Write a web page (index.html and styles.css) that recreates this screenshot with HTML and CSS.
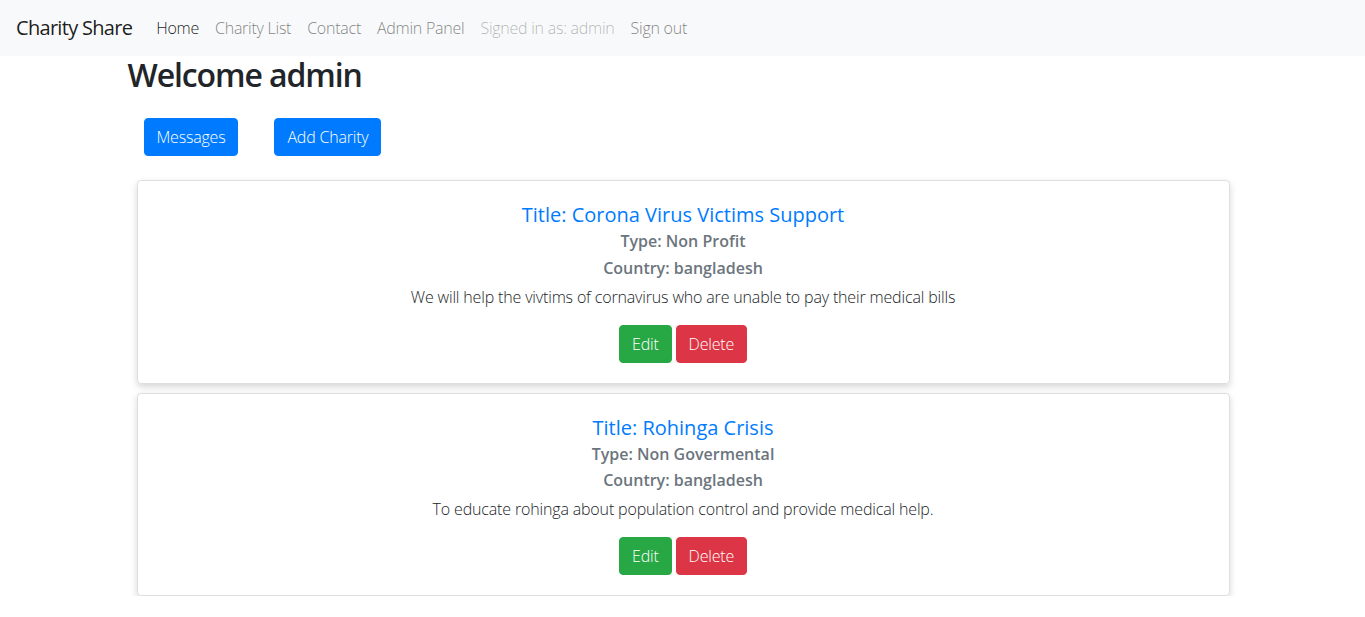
FILE: index.html
```html
<!DOCTYPE html>
<html lang="en">
<head>
<meta charset="utf-8">
<title>Charity Share</title>
<link rel="stylesheet" href="styles.css">
</head>
<body>
<nav class="navbar">
  <a class="brand" href="#">Charity Share</a>
  <ul class="nav">
    <li><a class="nav-link active" href="#">Home</a></li>
    <li><a class="nav-link" href="#">Charity List</a></li>
    <li><a class="nav-link" href="#">Contact</a></li>
    <li><a class="nav-link" href="#">Admin Panel</a></li>
    <li><span class="nav-link disabled">Signed in as: admin</span></li>
    <li><a class="nav-link" href="#">Sign out</a></li>
  </ul>
</nav>
<main class="container">
  <h2 class="welcome">Welcome admin</h2>
  <div class="actions">
    <a class="btn btn-primary" href="#">Messages</a>
    <a class="btn btn-primary" href="#">Add Charity</a>
  </div>
  <div class="cards">
    <div class="card">
      <h5 class="card-title">Title: Corona Virus Victims Support</h5>
      <h6 class="card-sub">Type: Non Profit</h6>
      <h6 class="card-sub">Country: bangladesh</h6>
      <p class="card-text">We will help the vivtims of cornavirus who are unable to pay their medical bills</p>
      <div class="card-btns">
        <a class="btn btn-success" href="#">Edit</a>
        <a class="btn btn-danger" href="#">Delete</a>
      </div>
    </div>
    <div class="card">
      <h5 class="card-title">Title: Rohinga Crisis</h5>
      <h6 class="card-sub">Type: Non Govermental</h6>
      <h6 class="card-sub">Country: bangladesh</h6>
      <p class="card-text">To educate rohinga about population control and provide medical help.</p>
      <div class="card-btns">
        <a class="btn btn-success" href="#">Edit</a>
        <a class="btn btn-danger" href="#">Delete</a>
      </div>
    </div>
  </div>
</main>
</body>
</html>
```

FILE: styles.css
```css
* { box-sizing: border-box; }
html, body { margin: 0; padding: 0; }
body {
  font-family: "Open Sans", "Noto Sans", "Liberation Sans", sans-serif;
  font-size: 16px;
  font-weight: 300;
  line-height: 1.5;
  color: #212529;
  background: #fff;
}
a { text-decoration: none; }

.navbar {
  display: flex;
  align-items: center;
  height: 56px;
  padding: 8px 16px;
  background: #f8f9fa;
}
.brand {
  font-size: 20px;
  font-weight: 400;
  line-height: 30px;
  letter-spacing: -0.7px;
  color: rgba(0,0,0,.9);
  margin-right: 16px;
}
.nav {
  display: flex;
  list-style: none;
  margin: 0;
  padding: 0;
}
.nav-link {
  display: block;
  padding: 8px;
  letter-spacing: -0.25px;
  color: rgba(0,0,0,.5);
}
.nav-link.active { color: rgba(0,0,0,.9); }
.nav-link.disabled { color: rgba(0,0,0,.3); }

.container {
  max-width: 1140px;
  margin: 0 auto;
  padding: 0 15px;
}
.welcome {
  margin: 0 0 8px;
  font-size: 32px;
  font-weight: 600;
  line-height: 1.2;
  letter-spacing: -1.1px;
  color: #212529;
}
.actions {
  display: flex;
  gap: 36px;
  padding: 16px;
}
.btn {
  display: inline-block;
  padding: 6px 12px;
  font-size: 16px;
  line-height: 24px;
  border: 1px solid transparent;
  border-radius: 4px;
  color: #fff;
  font-weight: 300;
  letter-spacing: -0.2px;
}
.btn-primary { background: #007bff; border-color: #007bff; }
.btn-success { background: #28a745; border-color: #28a745; }
.btn-danger { background: #dc3545; border-color: #dc3545; }

.cards {
  display: flex;
  flex-direction: column;
  gap: 9px;
  margin: 8px 8px 0 9px;
}
.card {
  border: 1px solid rgba(0,0,0,.125);
  border-radius: 4px;
  padding: 22px 19px 20px;
  text-align: center;
  box-shadow: 0 3px 7px rgba(0,0,0,.16);
}
.card-title {
  margin: 0 0 5px;
  font-size: 20px;
  font-weight: 400;
  line-height: 24px;
  color: #007bff;
}
.card-sub {
  margin: 0 0 7px;
  font-size: 16px;
  font-weight: 600;
  line-height: 19.2px;
  color: #6c757d;
}
.card-text {
  margin: 0 0 16px;
  letter-spacing: -0.16px;
}
.card-btns {
  display: flex;
  justify-content: center;
  gap: 4px;
}
```
